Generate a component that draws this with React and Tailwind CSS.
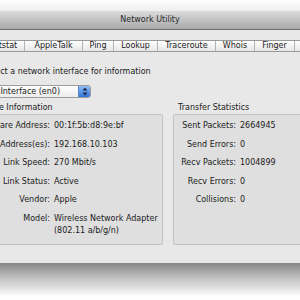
import React from "react";

const font = { fontFamily: '"DejaVu Sans", "Lucida Grande", sans-serif' };

const tabs = [
  { label: "Info", w: "w-[36px]" },
  { label: "Netstat", w: "w-[44px]" },
  { label: "AppleTalk", w: "w-[58px]" },
  { label: "Ping", w: "w-[31px]" },
  { label: "Lookup", w: "w-[44px]" },
  { label: "Traceroute", w: "w-[58px]" },
  { label: "Whois", w: "w-[39px]" },
  { label: "Finger", w: "w-[40px]" },
  { label: "Port Scan", w: "w-[52px]" },
];

const infoRows = [
  ["Hardware Address:", "00:1f:5b:d8:9e:bf"],
  ["IP Address(es):", "192.168.10.103"],
  ["Link Speed:", "270 Mbit/s"],
  ["Link Status:", "Active"],
  ["Vendor:", "Apple"],
  ["Model:", "Wireless Network Adapter", "(802.11 a/b/g/n)"],
];

const statRows = [
  ["Sent Packets:", "2664945"],
  ["Send Errors:", "0"],
  ["Recv Packets:", "1004899"],
  ["Recv Errors:", "0"],
  ["Collisions:", "0"],
];

function Rows({ rows, labelW }) {
  return (
    <div className="flex flex-col gap-[6.5px] pt-[5px]">
      {rows.map(([label, value, extra]) => (
        <div key={label} className="flex leading-[12px] whitespace-nowrap">
          <span className={`${labelW} shrink-0 text-right`}>{label}</span>
          <span className="ml-[4px]">
            {value}
            {extra && (
              <>
                <br />
                {extra}
              </>
            )}
          </span>
        </div>
      ))}
    </div>
  );
}

export default function App() {
  return (
    <div
      className="w-[300px] h-[300px] overflow-hidden bg-white text-[8px] text-[#1a1a1a]"
      style={font}
    >
      <div className="h-[11px] bg-gradient-to-b from-white to-[#eeeeee]" />

      {/* title bar */}
      <div className="h-[19px] flex items-center justify-center border-b border-[#6e6e6e] bg-gradient-to-b from-[#dcdcdc] to-[#a9a9a9] text-[#2a2a2a]">
        Network Utility
      </div>

      {/* window body */}
      <div className="h-[233px] bg-[#e8e8e8] pt-[10px] overflow-hidden">
        <div className="flex ml-[-56px] h-[12px] w-max border border-[#9a9a9a] bg-gradient-to-b from-white to-[#e6e6e6]">
          {tabs.map((t, i) => (
            <div
              key={t.label}
              className={`${t.w} shrink-0 flex items-center justify-center leading-none ${
                i < tabs.length - 1 ? "border-r border-[#b4b4b4]" : ""
              }`}
            >
              {t.label}
            </div>
          ))}
        </div>

        <div className="mt-[14px] ml-[-17px] leading-[12px] whitespace-nowrap">
          Select a network interface for information
        </div>

        <div className="mt-[7px] ml-[-38px] w-[129px] h-[13px] flex items-center rounded-[3px] border border-[#9c9c9c] bg-gradient-to-b from-white to-[#ececec] overflow-hidden">
          <span className="pl-[8px] flex-1 whitespace-nowrap leading-none">
            AirPort Interface (en0)
          </span>
          <span className="w-[12px] h-full flex items-center justify-center bg-gradient-to-b from-[#8fbef5] to-[#2f72d6] border-l border-[#5a86c4]">
            <svg width="6" height="9" viewBox="0 0 6 9">
              <path d="M3 0.5 L5.5 3.5 H0.5 Z" fill="#1d2a44" />
              <path d="M3 8.5 L5.5 5.5 H0.5 Z" fill="#1d2a44" />
            </svg>
          </span>
        </div>

        <div className="mt-[4px] flex gap-[10px] ml-[-37px]">
          <div className="w-[200px] shrink-0">
            <div className="leading-[12px] pl-[5px] whitespace-nowrap">
              Interface Information
            </div>
            <div className="h-[131px] rounded-[2px] border border-[#c2c2c2] bg-[#dfdfdf]">
              <Rows rows={infoRows} labelW="w-[86px]" />
            </div>
          </div>
          <div className="w-[200px] shrink-0">
            <div className="leading-[12px] pl-[5px] whitespace-nowrap">
              Transfer Statistics
            </div>
            <div className="h-[131px] rounded-[2px] border border-[#c2c2c2] bg-[#dfdfdf]">
              <Rows rows={statRows} labelW="w-[62px]" />
            </div>
          </div>
        </div>
      </div>

      {/* window shadow */}
      <div className="h-[34px] bg-gradient-to-b from-[#878787] via-[#c8c8c8] to-white" />
    </div>
  );
}
